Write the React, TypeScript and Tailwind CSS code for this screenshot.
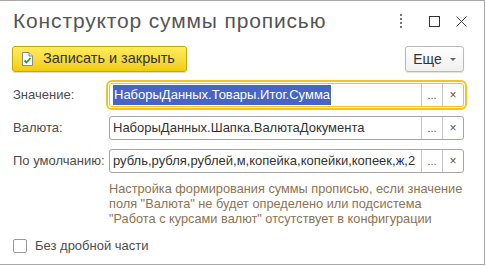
import React from "react";

function DocIcon() {
    return (
        <svg width="11" height="14" viewBox="0 0 11 14">
            <path d="M0.5 0.5 H7 L10.5 4 V13.5 H0.5 Z" fill="#ffffff" stroke="#8a8a8a" />
            <path d="M7 0.5 V4 H10.5" fill="#e6e6e6" stroke="#8a8a8a" />
            <path d="M2.5 8.5 L4.5 10.5 L8.5 6" fill="none" stroke="#2e9e2e" strokeWidth="1.8" />
        </svg>
    );
}

function Field({ value, active }: { value: string; active?: boolean }) {
    return (
        <div className={`flex h-[24px] flex-1 rounded-[3px] border bg-white ${active ? "border-[#f5c518] outline-2 outline-offset-[1px] outline-[#f5c518]" : "border-[#a5a5a5]"}`}>
            <div className="flex flex-1 items-center overflow-hidden whitespace-nowrap pl-[3px] text-[13px] text-[#333333]">
                {active ? <span className="bg-[#4765c4] px-[1px] text-white">{value}</span> : <span>{value}</span>}
            </div>
            <div className="flex w-[21px] items-center justify-center border-l border-[#c8c8c8] text-[11px] text-[#555]">...</div>
            <div className="flex w-[21px] items-center justify-center border-l border-[#c8c8c8] text-[12px] text-[#555]">×</div>
        </div>
    );
}

export default function App() {
    return (
        <div className="h-[266px] w-[486px] overflow-hidden bg-white" style={{ fontFamily: '"Liberation Sans", Arial, sans-serif' }}>
            <div className="h-[265px] w-[485px] border-t border-r border-b border-[#a8a8a8]">
                <div className="flex h-[40px] items-center pl-[13px]">
                    <span className="text-[21px] tracking-[0.85px] text-[#555555]">Конструктор суммы прописью</span>
                    <div className="ml-auto mr-[17px] flex items-center">
                        <div className="flex flex-col gap-[2px]">
                            <span className="h-[2px] w-[2px] bg-[#777]" />
                            <span className="h-[2px] w-[2px] bg-[#777]" />
                            <span className="h-[2px] w-[2px] bg-[#777]" />
                            <span className="h-[2px] w-[2px] bg-[#777]" />
                        </div>
                        <div className="ml-[27px] h-[11px] w-[11px] border border-[#333]" />
                        <svg className="ml-[16px]" width="11" height="11" viewBox="0 0 11 11">
                            <path d="M0.5 0.5 L10.5 10.5 M10.5 0.5 L0.5 10.5" stroke="#444" strokeWidth="1" />
                        </svg>
                    </div>
                </div>

                <div className="mt-[5px] flex items-center pl-[12px] pr-[20px]">
                    <button className="flex h-[26px] w-[175px] items-center gap-[10px] rounded-[3px] border border-[#c6a800] bg-gradient-to-b from-[#ffec5c] to-[#f2cc00] pl-[9px] text-[14.5px] text-[#333] shadow-[0_1px_1px_rgba(0,0,0,0.15)]">
                        <DocIcon />
                        <span>Записать и закрыть</span>
                    </button>
                    <button className="ml-auto flex h-[26px] w-[59px] items-center justify-center gap-[8px] rounded-[3px] border border-[#b8b8b8] bg-gradient-to-b from-white to-[#f0f0f0] text-[14px] text-[#333] shadow-[0_1px_1px_rgba(0,0,0,0.12)]">
                        <span>Еще</span>
                        <svg width="6" height="3" viewBox="0 0 6 3"><path d="M0 0 H6 L3 3 Z" fill="#666" /></svg>
                    </button>
                </div>

                <div className="mt-[11px] flex flex-col gap-[9px] pl-[13px] pr-[20px] text-[13px] text-[#4d4d4d]">
                    <div className="flex items-center">
                        <span className="w-[96px]">Значение:</span>
                        <Field value="НаборыДанных.Товары.Итог.Сумма" active />
                    </div>
                    <div className="flex items-center">
                        <span className="w-[96px]">Валюта:</span>
                        <Field value="НаборыДанных.Шапка.ВалютаДокумента" />
                    </div>
                    <div className="flex items-center">
                        <span className="w-[96px]">По умолчанию:</span>
                        <Field value="рубль,рубля,рублей,м,копейка,копейки,копеек,ж,2" />
                    </div>
                </div>

                <p className="mt-[8px] ml-[109px] mr-[14px] text-[12.75px] leading-[15px] text-[#8c7353]">
                    Настройка формирования суммы прописью, если значение поля "Валюта" не будет определено или подсистема "Работа с курсами валют" отсутствует в конфигурации
                </p>

                <label className="mt-[10px] ml-[13px] flex items-center gap-[8px] text-[13px] text-[#4d4d4d]">
                    <span className="h-[14px] w-[14px] rounded-[2px] border border-[#999] bg-white" />
                    <span>Без дробной части</span>
                </label>
            </div>
        </div>
    );
}
